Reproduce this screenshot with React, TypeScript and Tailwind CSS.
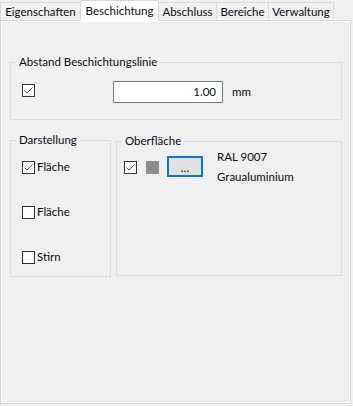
const Check = ({ checked }: { checked?: boolean }) => (
    <span className="w-[13px] h-[13px] border border-[#333333] bg-white flex items-center justify-center shrink-0">
        {checked && (
            <svg width="11" height="11" viewBox="0 0 11 11">
                <polyline points="1.5,5.5 4,8 9.5,2.5" fill="none" stroke="#5a5a5a" strokeWidth="1" />
            </svg>
        )}
    </span>
);

const Group = ({ title, className, children }: { title: string; className: string; children: React.ReactNode }) => (
    <fieldset className={`border border-[#dcdcdc] ${className}`}>
        <legend className="ml-[5px] px-[3px] leading-[16px]">{title}</legend>
        {children}
    </fieldset>
);

const App = () => {
    return (
        <div className="w-[353px] h-[406px] bg-[#f0f0f0] font-['Lato',sans-serif] text-[11.5px] leading-[16px] text-[#0a0a14]">
            {/* Tabs */}
            <div className="flex items-start h-[20px]">
                <div className="mt-[2px] w-[80px] h-[18px] border-l border-t border-[#d9d9d9] bg-[#f0f0f0] flex items-center justify-center pt-px">
                    Eigenschaften
                </div>
                <div className="relative z-10 w-[79px] h-[21px] border-l border-r border-t border-[#d9d9d9] bg-white flex items-center justify-center pb-[1px]">
                    Beschichtung
                </div>
                <div className="mt-[2px] w-[58px] h-[18px] border-r border-t border-[#d9d9d9] bg-[#f0f0f0] flex items-center justify-center pt-px">
                    Abschluss
                </div>
                <div className="mt-[2px] w-[52px] h-[18px] border-r border-t border-[#d9d9d9] bg-[#f0f0f0] flex items-center justify-center pt-px">
                    Bereiche
                </div>
                <div className="mt-[2px] w-[65px] h-[18px] border-r border-t border-[#d9d9d9] bg-[#f0f0f0] flex items-center justify-center pt-px">
                    Verwaltung
                </div>
            </div>

            {/* Tab page */}
            <div className="w-[351px] h-[384px] border border-[#d9d9d9] bg-white p-px">
                <div className="h-full bg-[#f0f0f0] pl-[8px] pt-[32px]">
                    <Group title="Abstand Beschichtungslinie" className="w-[332px] h-[66px]">
                        <div className="flex items-start pl-[11px] pt-[11px]">
                            <span className="mt-[3px]">
                                <Check checked />
                            </span>
                            <div className="ml-[78px] w-[110px] h-[22px] border border-[#7a7a7a] bg-white flex items-center justify-end pr-[6px]">
                                1.00
                            </div>
                            <span className="ml-[9px] self-center">mm</span>
                        </div>
                    </Group>

                    <div className="flex items-start gap-[5px] mt-[12px]">
                        <Group title="Darstellung" className="w-[101px] h-[145px]">
                            <div className="flex flex-col gap-[29px] pl-[11px] pt-[11px]">
                                <div className="flex items-center h-[16px]">
                                    <Check checked />
                                    <span className="ml-[2px]">Fläche</span>
                                </div>
                                <div className="flex items-center h-[16px]">
                                    <Check />
                                    <span className="ml-[2px]">Fläche</span>
                                </div>
                                <div className="flex items-center h-[16px]">
                                    <Check />
                                    <span className="ml-[2px]">Stirn</span>
                                </div>
                            </div>
                        </Group>

                        <Group title="Oberfläche" className="mt-px w-[226px] h-[143px]">
                            <div className="flex items-start pl-[7px] pt-[7px]">
                                <span className="mt-[5px]">
                                    <Check checked />
                                </span>
                                <span className="mt-[5px] ml-[9px] w-[13px] h-[13px] bg-[#8d8d89]" />
                                <button className="ml-[8px] w-[36px] h-[21px] border-2 border-[#0078d7] bg-[#e1e1e1] flex items-center justify-center pt-[3px] text-[12px] leading-none">
                                    ...
                                </button>
                                <div className="ml-[14px] -mt-[9px] flex flex-col leading-[20px]">
                                    <span>RAL 9007</span>
                                    <span>Graualuminium</span>
                                </div>
                            </div>
                        </Group>
                    </div>
                </div>
            </div>
        </div>
    );
};

export default App;
